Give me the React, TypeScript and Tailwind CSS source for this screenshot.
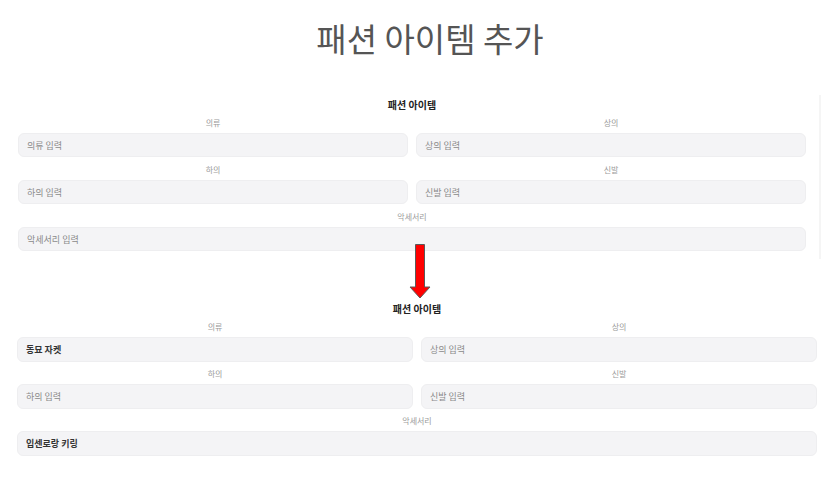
import React from "react";

const font = { fontFamily: '"Noto Sans CJK KR", "Noto Sans", sans-serif' };

interface FieldProps {
  label: string;
  placeholder: string;
  value?: string;
  wide?: boolean;
  tall?: boolean;
}

const Field = ({ label, placeholder, value, wide, tall }: FieldProps) => (
  <div className={wide ? "col-span-2 flex flex-col" : "flex flex-col"}>
    <div className="mb-[4px] h-[12px] text-center text-[8px] leading-[12px] text-[#9a9a9a]">
      {label}
    </div>
    <input
      readOnly
      defaultValue={value}
      placeholder={placeholder}
      className={`${tall ? "h-[25px]" : "h-[24px]"} w-full rounded-[6px] border border-[#eeeef0] bg-[#f4f4f6] px-[8px] text-[9px] font-semibold text-[#333] outline-none placeholder:font-normal placeholder:text-[#8a8a8a]`}
    />
  </div>
);

const fields = [
  { label: "의류", placeholder: "의류 입력" },
  { label: "상의", placeholder: "상의 입력" },
  { label: "하의", placeholder: "하의 입력" },
  { label: "신발", placeholder: "신발 입력" },
];

const Arrow = () => (
  <svg width="22" height="55" viewBox="0 0 22 55">
    <path
      d="M6.5 0.5 H15.5 V43 H21 L11 54 L1 43 H6.5 Z"
      fill="#ff0000"
      stroke="#5a5a5a"
      strokeWidth="1"
    />
  </svg>
);

export default function App() {
  const filled: Record<string, string> = { 의류: "동묘 자켓" };

  return (
    <div className="w-[840px] h-[498px] overflow-hidden bg-white" style={font}>
      <div className="pl-[20px] pt-[17px] h-[95px] text-center text-[33px] leading-[42px] text-[#555]">
        패션 아이템 추가
      </div>

      {/* before */}
      <div className="w-[821px] border-r-2 border-[#f5f5f5] pl-[18px] pr-[13px] pt-[3px] pb-[8px]">
        <div className="mb-[5px] h-[14px] text-center text-[10px] font-bold leading-[14px] text-[#222]">
          패션 아이템
        </div>
        <div className="grid grid-cols-2 gap-x-[8px] gap-y-[7px]">
          {fields.map((f) => (
            <Field key={f.label} label={f.label} placeholder={f.placeholder} />
          ))}
          <Field wide label="악세서리" placeholder="악세서리 입력" />
        </div>
      </div>

      <div className="relative z-10 -mt-[15px] flex justify-center">
        <Arrow />
      </div>

      {/* after */}
      <div className="mt-[3px] w-[834px] pl-[17px] pr-[17px]">
        <div className="mb-[5px] h-[14px] text-center text-[10px] font-bold leading-[14px] text-[#222]">
          패션 아이템
        </div>
        <div className="grid grid-cols-2 gap-x-[8px] gap-y-[6px]">
          {fields.map((f) => (
            <Field
              key={f.label}
              tall
              label={f.label}
              placeholder={f.placeholder}
              value={filled[f.label]}
            />
          ))}
          <Field wide tall label="악세서리" placeholder="악세서리 입력" value="입센로랑 키링" />
        </div>
      </div>
    </div>
  );
}
